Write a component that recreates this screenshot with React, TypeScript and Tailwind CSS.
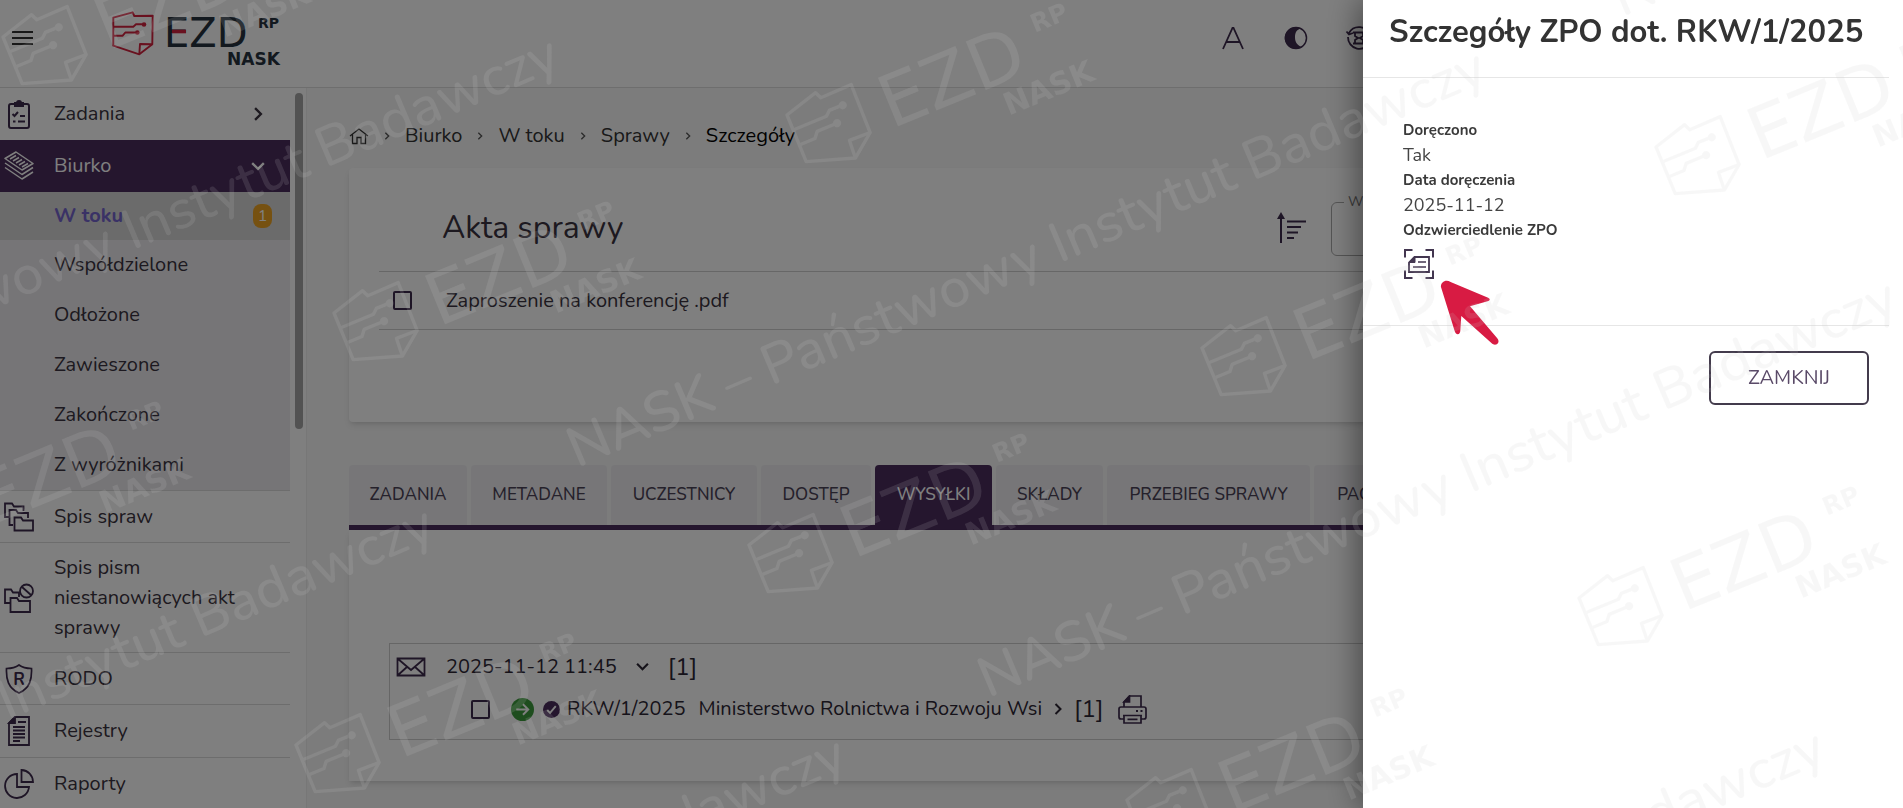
import React, { useState } from 'react';

type IconProps = { className?: string };

const SUB_ITEMS = ['Współdzielone', 'Odłożone', 'Zawieszone', 'Zakończone', 'Z wyróżnikami'];

const TABS = [
    { label: 'ZADANIA', width: 'w-[118px]' },
    { label: 'METADANE', width: 'w-[136px]' },
    { label: 'UCZESTNICY', width: 'w-[146px]' },
    { label: 'DOSTĘP', width: 'w-[110px]' },
    { label: 'WYSYŁKI', width: 'w-[117px]' },
    { label: 'SKŁADY', width: 'w-[107px]' },
    { label: 'PRZEBIEG SPRAWY', width: 'w-[203px]' },
    { label: 'PACZKI', width: 'w-[105px]' },
    { label: 'HISTORIA', width: 'w-[127px]' },
];

const LOGO_MARKS = [
    [3, 37], [787, 115], [1656, 147], [334, 313], [1202, 348],
    [-117, 513], [749, 545], [1579, 598], [296, 745], [1127, 800],
];

const TEXT_MARKS = [
    [-350, 455], [577, 468], [988, 698], [-475, 925], [-63, 1155], [916, 1148], [1622, 17],
];

const App: React.FC = () => {
    const [activeTab, setActiveTab] = useState('WYSYŁKI');
    const [drawerOpen, setDrawerOpen] = useState(true);

    return (
        <div className="flex h-screen flex-col overflow-hidden bg-white font-['Nunito','Lato',sans-serif] text-xl text-[#3a3340]">
            <TopBar />
            <div className="flex min-h-0 flex-1">
                <Sidebar />
                <main className="min-w-0 flex-1 bg-[#f8f8f8] pt-8 pr-10 pl-[42px]">
                    <Breadcrumbs />
                    <CaseFiles />
                    <div className="mt-[43px] flex gap-1 border-b-[5px] border-[#4a2c5c]" role="tablist">
                        {TABS.map((tab) => (
                            <button
                                key={tab.label}
                                role="tab"
                                aria-selected={tab.label === activeTab}
                                onClick={() => setActiveTab(tab.label)}
                                className={`h-[60px] shrink-0 rounded-t-sm text-[17px] font-medium ${tab.width} ${tab.label === activeTab ? 'bg-[#4a2c5c] text-white' : 'bg-[#eeedf0] text-[#4b4257]'}`}
                            >
                                {tab.label}
                            </button>
                        ))}
                    </div>
                    <Shipments />
                </main>
            </div>

            {drawerOpen && (
                <>
                    <div className="fixed inset-0 bg-black/50" />
                    <Drawer onClose={() => setDrawerOpen(false)} />
                    <PointerArrow className="pointer-events-none fixed top-[279px] right-[400px] h-[68px] w-[63px]" />
                </>
            )}
            <Watermark />
        </div>
    );
};

const TopBar = () => (
    <header className="flex h-[88px] shrink-0 items-start border-b border-[#dcdcdc] bg-white">
        <button aria-label="Menu" className="mt-[31px] ml-3 flex w-[21px] flex-col gap-1">
            <span className="h-0.5 bg-[#333]" />
            <span className="h-0.5 bg-[#333]" />
            <span className="h-0.5 bg-[#333]" />
        </button>
        <a href="#" aria-label="EZD RP" className="mt-3 ml-[79px]">
            <svg width="172" height="56" viewBox="0 0 172 56" className="overflow-visible">
                <Logo color="#26323e" accent="#d2233f" />
            </svg>
        </a>
        <div className="mt-6 ml-auto flex w-[684px] items-center gap-[35px] text-[#3d2a4c]">
            <button aria-label="Rozmiar tekstu"><LetterAIcon className="h-7 w-7" /></button>
            <button aria-label="Kontrast"><ContrastIcon className="h-7 w-7" /></button>
            <button aria-label="Czas sesji"><SessionIcon className="h-7 w-7" /></button>
        </div>
    </header>
);

const Sidebar = () => (
    <div className="flex w-[307px] shrink-0 overflow-hidden border-r border-[#efefef] bg-white">
        <nav className="w-[290px]">
            <a href="#" className="flex h-[52px] items-center">
                <NavIcon><TasksIcon className="h-[30px] w-[30px]" /></NavIcon>
                <span className="flex-1">Zadania</span>
                <ChevronIcon className="mr-[25px] h-[14px] w-[14px]" />
            </a>
            <a href="#" className="flex h-[52px] items-center bg-[#4a2c5c] text-white">
                <span className="ml-1 w-[50px]"><StackIcon className="h-[30px] w-[30px]" /></span>
                <span className="flex-1">Biurko</span>
                <ChevronIcon className="mr-[25px] h-[14px] w-[14px] rotate-90" />
            </a>
            <a href="#" className="flex h-12 items-center bg-[#d6d6d6] pl-[54px] font-bold text-[#7464cc]">
                <span className="flex-1">W toku</span>
                <span className="mr-[18px] flex h-6 w-[19px] items-center justify-center rounded-lg bg-[#eda322] text-base font-normal text-white">1</span>
            </a>
            <div className="border-b border-[#dadada] bg-[#ecebee]">
                {SUB_ITEMS.map((item) => (
                    <a href="#" key={item} className="flex h-[50px] items-center pl-[54px]">{item}</a>
                ))}
            </div>
            <a href="#" className="flex h-[52px] items-center border-b border-[#dadada]">
                <NavIcon><FoldersIcon className="h-[30px] w-[30px]" /></NavIcon>
                Spis spraw
            </a>
            <a href="#" className="flex h-[110px] items-center border-b border-[#dadada] leading-[30px]">
                <NavIcon><FoldersBlockedIcon className="h-[30px] w-[30px]" /></NavIcon>
                <span className="w-[190px]">Spis pism niestanowiących akt sprawy</span>
            </a>
            <a href="#" className="flex h-[52px] items-center border-b border-[#dadada]">
                <NavIcon><ShieldIcon className="h-[30px] w-[30px]" /></NavIcon>
                RODO
            </a>
            <a href="#" className="flex h-[53px] items-center border-b border-[#dadada]">
                <NavIcon><RegisterIcon className="h-[30px] w-[30px]" /></NavIcon>
                Rejestry
            </a>
            <a href="#" className="flex h-[52px] items-center">
                <NavIcon><PieIcon className="h-[30px] w-[30px]" /></NavIcon>
                Raporty
            </a>
        </nav>
        <div className="mt-[5px] ml-[5px] h-[336px] w-2 rounded-full bg-[#a5a5a5]" />
    </div>
);

const NavIcon = ({ children }: { children: React.ReactNode }) => (
    <span className="ml-1 w-[50px] shrink-0 text-[#3d2a4c]">{children}</span>
);

const Breadcrumbs = () => (
    <nav className="flex h-8 items-center gap-[14px] text-[#333]">
        <a href="#" aria-label="Start"><HomeIcon className="h-[18px] w-[20px]" /></a>
        <ChevronIcon className="h-2 w-2 text-[#555]" />
        <a href="#">Biurko</a>
        <ChevronIcon className="h-2 w-2 text-[#555]" />
        <a href="#">W toku</a>
        <ChevronIcon className="h-2 w-2 text-[#555]" />
        <a href="#">Sprawy</a>
        <ChevronIcon className="h-2 w-2 text-[#555]" />
        <span className="text-black">Szczegóły</span>
    </nav>
);

const CaseFiles = () => (
    <section className="mt-4 h-[254px] rounded-sm bg-white px-[30px] pt-8 shadow-md">
        <div className="flex h-[72px] items-start border-b border-[#cfcfcf] pl-[63px]">
            <h1 className="mt-2 flex-1 text-[32px] leading-10">Akta sprawy</h1>
            <button aria-label="Sortuj" className="mt-3"><SortIcon className="h-[31px] w-[31px]" /></button>
            <fieldset className="-mt-1.5 ml-6 h-[62px] w-[502px] rounded-md border border-[#aaa]">
                <legend className="ml-3 px-1 text-sm leading-4 text-[#777]">
                    <label htmlFor="find">Wyszukaj</label>
                </legend>
                <input id="find" className="w-full px-4 outline-none" />
            </fieldset>
        </div>
        <label className="flex h-[58px] items-center border-b border-[#cfcfcf] pl-[14px]">
            <input type="checkbox" className="mr-[34px] h-[19px] w-[19px] appearance-none rounded-xs border-2 border-[#3d2a4c]" />
            Zaproszenie na konferencję .pdf
        </label>
    </section>
);

const Shipments = () => (
    <section className="h-[251px] bg-white px-10 pt-[113px] shadow-md">
        <div className="h-[97px] border border-[#cdcdcd] text-[#2d2634]">
            <div className="flex h-[45px] items-center pl-[6px]">
                <MailIcon className="mr-5 h-[20px] w-[30px]" />
                <span>2025-11-12 11:45</span>
                <ChevronIcon className="mr-[19px] ml-[19px] h-[13px] w-[13px] rotate-90" />
                <span className="text-2xl">[1]</span>
            </div>
            <div className="flex h-10 items-center pl-[81px]">
                <input type="checkbox" aria-label="RKW/1/2025" className="mr-[21px] h-[19px] w-[19px] appearance-none rounded-xs border-2 border-[#3d2a4c]" />
                <SentIcon className="mr-[9px] h-[23px] w-[23px]" />
                <CheckedIcon className="mr-[7px] h-[17px] w-[17px]" />
                <span className="mr-[13px]">RKW/1/2025</span>
                <span>Ministerstwo Rolnictwa i Rozwoju Wsi</span>
                <ChevronIcon className="mx-[10px] h-3 w-3" />
                <span className="mr-[14px] text-2xl">[1]</span>
                <button aria-label="Drukuj"><PrinterIcon className="h-[29px] w-[29px]" /></button>
            </div>
        </div>
    </section>
);

const Drawer = ({ onClose }: { onClose: () => void }) => (
    <aside className="fixed top-0 right-0 h-full w-[540px] bg-white text-[#333] shadow-[-4px_0_30px_rgba(0,0,0,0.45)]">
        <h2 className="mr-[14px] h-[78px] border-b border-[#e6e6e6] pt-3 pl-[26px] text-[31px] leading-10 font-bold whitespace-nowrap">
            Szczegóły ZPO dot. RKW/1/2025
        </h2>
        <dl className="mr-[14px] h-[248px] border-b border-[#e6e6e6] pt-10 pl-10 text-lg leading-[25px] text-[#444]">
            <dt className="text-[15px] leading-[25px] font-bold text-[#3a3a3a]">Doręczono</dt>
            <dd>Tak</dd>
            <dt className="text-[15px] leading-[25px] font-bold text-[#3a3a3a]">Data doręczenia</dt>
            <dd>2025-11-12</dd>
            <dt className="text-[15px] leading-[25px] font-bold text-[#3a3a3a]">Odzwierciedlenie ZPO</dt>
            <dd className="pt-[5px]">
                <button aria-label="Podgląd ZPO"><ScanIcon className="h-8 w-8" /></button>
            </dd>
        </dl>
        <div className="flex justify-end pt-[25px] pr-[34px]">
            <button onClick={onClose} className="h-[54px] w-[160px] rounded-md border-2 border-[#433b4c] text-xl text-[#5a4a68]">
                ZAMKNIJ
            </button>
        </div>
    </aside>
);

const Logo = ({ color, accent }: { color: string; accent: string }) => (
    <g fill="none">
        <g stroke={accent} strokeWidth="1.9" strokeLinejoin="round">
            <path d="M1.3 5.7 20.7.3 22.3 4l18.4-.3-.4 28.6-13 10-26-8.6z" />
            <path d="M27.3 42.3 28 32l12.3.3M2 14.7h19.3l2.7-2.4h6M2 23.7h8.7l2.6-3.2h10.4" />
        </g>
        <circle cx="32" cy="12.5" r="2.3" fill={accent} />
        <circle cx="25.3" cy="20.5" r="2.3" fill={accent} />
        <g fill={color} fontFamily="'DejaVu Sans', sans-serif">
            <text x="52" y="35" fontSize="40">EZD</text>
            <text x="146" y="16" fontSize="14" fontWeight="bold">RP</text>
            <text x="115" y="53" fontSize="17" fontWeight="bold">NASK</text>
        </g>
        <path d="M60 19.500h14" stroke={accent} strokeWidth="3.6" />
    </g>
);

const Watermark = () => (
    <svg className="pointer-events-none fixed inset-0 h-full w-full opacity-14" aria-hidden="true">
        {LOGO_MARKS.map(([x, y]) => (
            <g key={`${x}-${y}`} transform={`translate(${x} ${y}) rotate(-22.4) scale(1.8) translate(-1.3 -5.7)`}>
                <Logo color="#cccccc" accent="#cccccc" />
            </g>
        ))}
        <g fill="#cccccc" fontSize="56" fontWeight="500" className="font-['Nunito','Lato',sans-serif]">
            {TEXT_MARKS.map(([x, y]) => (
                <text key={`${x}-${y}`} transform={`translate(${x} ${y}) rotate(-23)`}>
                    <tspan fontWeight="600">NASK</tspan> – Państwowy Instytut Badawczy
                </text>
            ))}
        </g>
    </svg>
);

const PointerArrow = ({ className }: IconProps) => (
    <svg className={className} viewBox="0 0 63 70">
        <path fill="#d81b43" d="M0 8C0 3 5 0 10 3l38 16c3 1 3 3 0 4L30 28l28 33c4 5-2 9-6 5L21 38l-1 15c0 5-5 5-6 0z" />
    </svg>
);

const ChevronIcon = ({ className }: IconProps) => (
    <svg className={className} viewBox="0 0 12 12" fill="none" stroke="currentColor" strokeWidth="2">
        <path d="M3.500 1 8.500 6l-5 5" />
    </svg>
);

const HomeIcon = ({ className }: IconProps) => (
    <svg className={className} viewBox="0 0 20 18" fill="none" stroke="currentColor" strokeWidth="1.3">
        <path d="M1 9 10 2l9 7M3.500 7.500V16.500H8v-6h4v6h4.500V7.500" />
    </svg>
);

const LetterAIcon = ({ className }: IconProps) => (
    <svg className={className} viewBox="0 0 28 28" fill="none" stroke="currentColor" strokeWidth="1.800">
        <path d="M4 25 13.500 4h1L24 25M7 18h14" />
    </svg>
);

const ContrastIcon = ({ className }: IconProps) => (
    <svg className={className} viewBox="0 0 28 28">
        <circle cx="14" cy="14" r="10.500" fill="none" stroke="currentColor" strokeWidth="1.500" />
        <path fill="currentColor" d="M17 3.500A11 11 0 1 0 20 23c-4-1-7-4.500-7-9.500s1.500-8 6-9z" />
    </svg>
);

const SessionIcon = ({ className }: IconProps) => (
    <svg className={className} viewBox="0 0 28 28" fill="none" stroke="currentColor" strokeWidth="1.800">
        <path d="M4 9A11.500 11.500 0 0 1 25 11M3 13a11.500 11.500 0 0 0 22 5M1.500 7.500 4 10.500 8 9" />
        <path d="M8 8.500h12M8 19.500h12M10 9v3l3 2-3 2v3M18 9v3l-3 2 3 2v3" />
    </svg>
);

const TasksIcon = ({ className }: IconProps) => (
    <svg className={className} viewBox="0 0 30 30" fill="none" stroke="currentColor" strokeWidth="2">
        <rect x="5" y="5" width="20" height="24" rx="2" />
        <path fill="currentColor" d="M11 7V4h2a2 2 0 0 1 4 0h2v3z" />
        <path d="m8.500 15 2 2 3.500-4M16 17h5M9 22.500h2.500M14 22.500h7" />
    </svg>
);

const StackIcon = ({ className }: IconProps) => (
    <svg className={className} viewBox="0 0 30 30" fill="none" stroke="currentColor" strokeWidth="1.500" strokeLinejoin="round">
        <path d="M1 7.500 12 1l17 11.500-11 6.500zM1 12l17 11.500 11-7M1 16.500 18 28l11-7" />
        <path d="m6 8 6-3.500M9 10l6-3.500M12 12l6-3.500M15 14l6-3.500M18 16l6-3.500" />
    </svg>
);

const FoldersIcon = ({ className }: IconProps) => (
    <svg className={className} viewBox="0 0 30 30" fill="none" stroke="currentColor" strokeWidth="1.800">
        <path d="M10.500 28.500v-13H17l2 3h10v10zM9 23H5.500V8H12l2 3h10v5M5 15H1V1.500h7l2 3h9.500V9" />
    </svg>
);

const FoldersBlockedIcon = ({ className }: IconProps) => (
    <svg className={className} viewBox="0 0 30 30" fill="none" stroke="currentColor" strokeWidth="1.800">
        <circle cx="22.500" cy="8" r="6.500" />
        <path d="m18 4 9 8M6.500 29V15H13l2 3h11v11zM6 20H1V6.500h6l2 3h6V14" />
    </svg>
);

const ShieldIcon = ({ className }: IconProps) => (
    <svg className={className} viewBox="0 0 30 30">
        <path fill="none" stroke="currentColor" strokeWidth="1.700" d="M15 1c4 3 8 3.500 12.500 3.500C28 15 26 24 15 29 4 24 2 15 2.500 4.500 7 4.500 11 4 15 1z" />
        <text x="15" y="20.500" textAnchor="middle" fontSize="17" fontWeight="bold" fill="currentColor">R</text>
    </svg>
);

const RegisterIcon = ({ className }: IconProps) => (
    <svg className={className} viewBox="0 0 30 30" fill="none" stroke="currentColor" strokeWidth="1.800">
        <path d="M11 1h14v28H5V7z" />
        <path fill="currentColor" d="M11 1v6H5z" />
        <path d="M14 6h8M9 11h12M9 14.500h12M9 18h12M9 21.500h12M9 25h7" />
    </svg>
);

const PieIcon = ({ className }: IconProps) => (
    <svg className={className} viewBox="0 0 30 30" fill="none" stroke="currentColor" strokeWidth="1.800">
        <path d="M13 5A12 12 0 1 0 25 18H13zM17.500 1A12 12 0 0 1 29 13H17.500z" />
    </svg>
);

const SortIcon = ({ className }: IconProps) => (
    <svg className={className} viewBox="0 0 31 31" fill="none" stroke="#3d2a4c" strokeWidth="2">
        <path d="M5 31V4M11 9.500h19M11 15h14M11 20.500h11M11 26h7" />
        <path fill="#3d2a4c" stroke="none" d="M5 0 9 7H1z" />
    </svg>
);

const MailIcon = ({ className }: IconProps) => (
    <svg className={className} viewBox="0 0 30 20" fill="none" stroke="#3d2a4c" strokeWidth="1.800">
        <path d="M1.500 1.500h27v17h-27zM1.500 1.500 15 13 28.500 1.500M1.500 18.500l10-9M28.500 18.500l-10-9" />
    </svg>
);

const SentIcon = ({ className }: IconProps) => (
    <svg className={className} viewBox="0 0 24 24" fill="none">
        <circle cx="12" cy="12" r="12" fill="#3d9a3d" />
        <path stroke="#fff" strokeWidth="2" d="M5.500 12h12.500M12.500 6.500 18 12l-5.500 5.500" />
    </svg>
);

const CheckedIcon = ({ className }: IconProps) => (
    <svg className={className} viewBox="0 0 18 18" fill="none">
        <circle cx="9" cy="9" r="9" fill="#4a2c5c" />
        <path stroke="#fff" strokeWidth="2" d="m4.500 9.500 3 3 6-7" />
    </svg>
);

const PrinterIcon = ({ className }: IconProps) => (
    <svg className={className} viewBox="0 0 29 29" fill="none" stroke="#3d2a4c" strokeWidth="1.700">
        <path d="M6 12V7l5.500-6H23v11M6 24H3a2 2 0 0 1-2-2v-8a2 2 0 0 1 2-2h23a2 2 0 0 1 2 2v8a2 2 0 0 1-2 2h-3" />
        <path d="M5 20.500h19M6 20.500V28h17v-7.500M9.500 24.300h10" />
        <path fill="#3d2a4c" d="M11.500 1v6H6z" />
        <path strokeWidth="2" d="M18 16h2M22.500 16h2" />
    </svg>
);

const ScanIcon = ({ className }: IconProps) => (
    <svg className={className} viewBox="0 0 32 32" fill="none" stroke="#433650" strokeWidth="2">
        <path d="M2 9.500V2h7.500M22.500 2H30v7.500M2 22.500V30h7.500M22.500 30H30v-7.500" />
        <path strokeWidth="1.800" d="M11.500 9H26v15H6V14.500z" />
        <path fill="#433650" strokeWidth="1" d="M12 9v5.500H6z" />
        <path strokeWidth="1.600" d="M15 14h8M10 19h13" />
    </svg>
);

export default App;
